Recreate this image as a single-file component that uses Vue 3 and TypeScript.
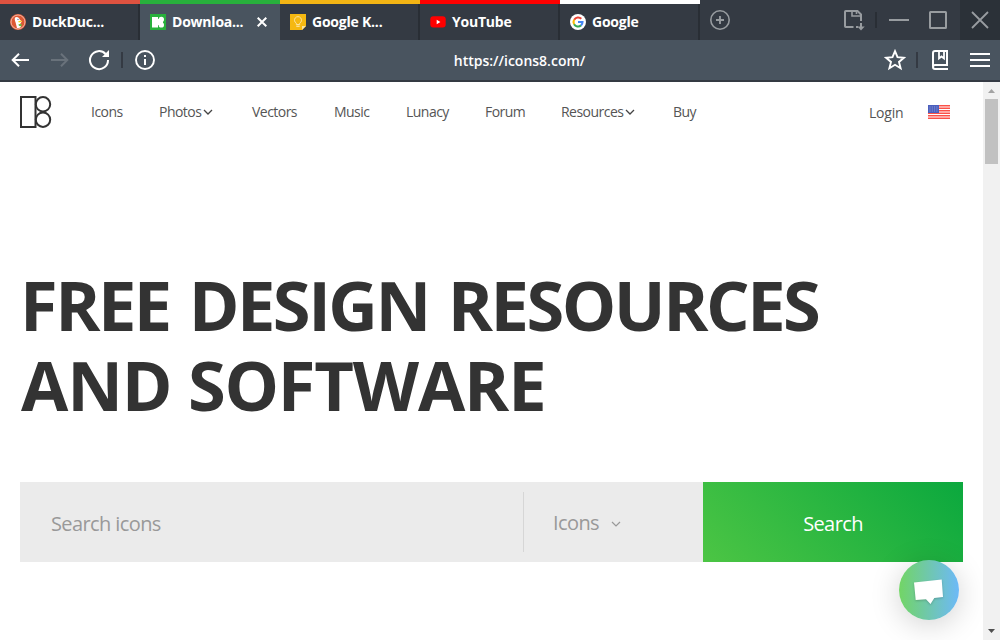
<script setup lang="ts">
interface Tab {
  title: string
  icon: string
  stripe: string
  active?: boolean
}

const tabs: Tab[] = [
  { title: 'DuckDuc...', icon: 'duck', stripe: '#de5240' },
  { title: 'Downloa...', icon: 'icons8', stripe: '#28b03c', active: true },
  { title: 'Google K...', icon: 'keep', stripe: '#f3b414' },
  { title: 'YouTube', icon: 'youtube', stripe: '#ff0000' },
  { title: 'Google', icon: 'google', stripe: '#ffffff' },
]

const links = [
  { label: 'Icons', menu: false },
  { label: 'Photos', menu: true },
  { label: 'Vectors', menu: false },
  { label: 'Music', menu: false },
  { label: 'Lunacy', menu: false },
  { label: 'Forum', menu: false },
  { label: 'Resources', menu: true },
  { label: 'Buy', menu: false },
]
</script>

<template>
  <div class="window">
    <div class="tabbar">
      <div
        v-for="tab in tabs"
        :key="tab.title"
        class="tab"
        :class="{ active: tab.active }"
        :style="{ borderTopColor: tab.stripe }"
      >
        <svg v-if="tab.icon === 'duck'" class="fav" viewBox="0 0 16 16">
          <circle cx="8" cy="8" r="8" fill="#de5833" />
          <circle cx="8" cy="8" r="7" fill="none" stroke="#f6d0c6" stroke-width=".8" />
          <path d="M5 3.500c1.800-1.200 4.200-.2 4.700 2l2.100 2-1.500 2 .7 3.500c-1.200 1-2.600 1.200-4 .9L5.600 8.500C4.800 6.500 4.500 5 5 3.500z" fill="#fff" />
          <path d="M8.200 7.200c1-.6 2.900-.7 3.900-.2-.4 1-2.300.9-3.300 1.600z" fill="#fdd20a" />
          <path d="M8.500 10.200l3-.4v2.600l-2.600-.6z" fill="#65bc46" />
          <circle cx="8" cy="5.300" r=".6" fill="#2d4f8e" />
        </svg>
        <svg v-else-if="tab.icon === 'icons8'" class="fav" viewBox="0 0 16 16">
          <path d="M0 0h16v16H0z" fill="#28b03c" />
          <path d="M2 3h6v10.500H2z" fill="#fff" />
          <path d="M8 5h5v6H8z" fill="#fff" />
          <circle cx="11.300" cy="5.500" r="2.700" fill="#fff" />
          <circle cx="11.300" cy="10.900" r="2.700" fill="#fff" />
          <path d="M8 2.500l1 1-1 1zM8 14l1-1-1-1zM14.200 7.500v1.400l-.9-.7z" fill="#28b03c" />
        </svg>
        <svg v-else-if="tab.icon === 'keep'" class="fav" viewBox="0 0 16 16">
          <path d="M0 0h16v12l-4 4H0z" fill="#f5b811" />
          <path d="M16 12l-4 4v-4z" fill="#fbe3a0" />
          <path d="M6.300 10.500V9.200a3.500 3.500 0 1 1 3.400 0v1.300z" fill="none" stroke="#fbe3a0" stroke-width="1" />
          <path d="M6.300 12.200h3.400" stroke="#fff1c9" stroke-width="1" />
        </svg>
        <svg v-else-if="tab.icon === 'youtube'" class="fav" viewBox="0 0 16 16">
          <rect x=".3" y="2.300" width="15.400" height="11.200" rx="3" fill="#f00" />
          <path d="M6.700 5.700v4.600l3.700-2.300z" fill="#fff" />
        </svg>
        <svg v-else class="fav" viewBox="0 0 16 16">
          <circle cx="8" cy="8" r="8" fill="#fff" />
          <g fill="none" stroke-width="2.100">
            <path d="M4.200 5.800A4.500 4.500 0 0 1 11.300 4.800" stroke="#ea4335" />
            <path d="M4.100 10.200A4.600 4.600 0 0 1 4.100 5.800" stroke="#fbbc05" />
            <path d="M11 11.400A4.500 4.500 0 0 1 4.100 10.200" stroke="#34a853" />
            <path d="M8 8h4.500A4.600 4.600 0 0 1 11 11.400" stroke="#4285f4" />
          </g>
        </svg>
        <span class="tab-title">{{ tab.title }}</span>
        <svg v-if="tab.active" class="tab-close" viewBox="0 0 10 10">
          <path d="M.7.700l8.600 8.600M9.300.700L.700 9.300" stroke="#fff" stroke-width="2" />
        </svg>
      </div>
      <svg class="plus" viewBox="0 0 20 20">
        <circle cx="10" cy="10" r="9.200" fill="none" stroke="#989ca0" stroke-width="1.600" />
        <path d="M10 6v8M6 10h8" stroke="#989ca0" stroke-width="1.900" />
      </svg>
      <div class="window-tools">
        <svg class="save" viewBox="0 0 22 22" fill="none" stroke="#989ca0" stroke-width="2">
          <path d="M10.500 18H2.800Q2 18 2 17.200V2.800Q2 2 2.800 2h11.700L18 5.500V12" />
          <path d="M9 2v5h8.500M13.500 2v3" stroke-width="1.600" />
          <path d="M13 18h2M18 14v4" />
          <path d="M14.300 17.500h7.400L18 21.500z" fill="#989ca0" stroke="none" />
        </svg>
        <i class="divider"></i>
        <svg class="minimize" viewBox="0 0 20 20"><path d="M0 10h20" stroke="#989ca0" stroke-width="2" /></svg>
        <svg class="maximize" viewBox="0 0 18 18"><rect x="1" y="1" width="16" height="16" rx=".5" fill="none" stroke="#989ca0" stroke-width="2" /></svg>
        <div class="close">
          <svg viewBox="0 0 18 18"><path d="M1 1l16 16M17 1L1 17" stroke="#989ca0" stroke-width="1.800" /></svg>
        </div>
      </div>
    </div>

    <div class="toolbar">
      <div class="side">
        <svg class="arrow" viewBox="0 0 18 14" fill="none" stroke="#fff" stroke-width="2">
          <path d="M18 7H1.500M8 .800L1.700 7 8 13.200" />
        </svg>
        <svg class="arrow forward" viewBox="0 0 18 14" fill="none" stroke="#69727b" stroke-width="2">
          <path d="M0 7h16.500M10 .800L16.300 7 10 13.200" />
        </svg>
        <svg class="reload" viewBox="0 0 22 22">
          <path d="M17.600 5A9 9 0 1 0 20 11" fill="none" stroke="#fff" stroke-width="2" />
          <path d="M21 1v7h-7z" fill="#fff" />
        </svg>
        <i class="divider"></i>
        <svg class="info" viewBox="0 0 20 20">
          <circle cx="10" cy="10" r="9" fill="none" stroke="#fff" stroke-width="1.900" />
          <path d="M10 5v2M10 9v6" stroke="#fff" stroke-width="2" />
        </svg>
      </div>
      <div class="address">https://icons8.com/</div>
      <div class="side end">
        <svg class="star" viewBox="0 0 22 22">
          <path d="M11 2.200l2.500 6 6.500.5-5 4.200 1.600 6.400L11 15.800l-5.600 3.500L7 12.900 2 8.700l6.500-.5z" fill="none" stroke="#fff" stroke-width="1.900" />
        </svg>
        <i class="divider"></i>
        <svg class="book" viewBox="0 0 16 20" fill="none" stroke="#fff" stroke-width="2">
          <path d="M15 15V1H3Q1 1 1 3v13.500M16 15H3q-2 0-2 2t2 2h13" />
          <path d="M7 1v7.500l2.500-2 2.500 2V1" stroke-width="1.800" />
        </svg>
        <svg class="menu" viewBox="0 0 20 14" stroke="#fff" stroke-width="2"><path d="M0 1h20M0 7h20M0 13h20" /></svg>
      </div>
    </div>

    <div class="viewport">
      <main class="page">
        <header>
          <svg class="logo" viewBox="0 0 32 32" fill="none" stroke="#333" stroke-width="2">
            <rect x="1" y="1" width="14.500" height="30" />
            <circle cx="23" cy="8.300" r="7.200" />
            <circle cx="23" cy="23.700" r="7.200" />
          </svg>
          <nav>
            <a v-for="link in links" :key="link.label">
              <span>{{ link.label }}</span>
              <svg v-if="link.menu" class="chev" viewBox="0 0 10 6"><path d="M1 1l4 4 4-4" fill="none" stroke="#444" stroke-width="1.300" /></svg>
            </a>
          </nav>
          <a class="login">Login</a>
          <svg class="flag" viewBox="0 0 22 14">
            <path d="M0 0h22v14H0z" fill="#fff" />
            <path d="M0 .7h22M0 3.200h22M0 5.700h22M0 8.200h22M0 10.700h22M0 13.200h22" stroke="#fb5148" stroke-width="1.400" />
            <path d="M0 0h11v8H0z" fill="#4b5fbd" />
            <path d="M1.500 2h8.500M1.500 4h8.500M1.500 6h8.500" stroke="#a7b0e0" stroke-width=".8" stroke-dasharray="1 1.300" />
          </svg>
        </header>

        <h1><span class="first">FREE DESIGN RESOURCES</span><br /><span class="second">AND SOFTWARE</span></h1>

        <form class="search">
          <div class="query">Search icons</div>
          <div class="kind">
            <span>Icons</span>
            <svg class="kind-chev" viewBox="0 0 10 6"><path d="M1 1l4 4 4-4" fill="none" stroke="#999" stroke-width="1.200" /></svg>
          </div>
          <div class="submit"><span>Search</span></div>
        </form>

        <div class="chat">
          <svg viewBox="0 0 60 60">
            <path d="M15 22.600L42.700 19.500 44 37 35.300 38 31.500 44 27 39.200 16.700 40z" fill="#fff" />
          </svg>
        </div>
      </main>
      <div class="scrollbar">
        <svg class="up" viewBox="0 0 7 4"><path d="M0 4h7L3.500 0z" fill="#a3a3a3" /></svg>
        <div class="thumb"></div>
        <svg class="down" viewBox="0 0 7 4"><path d="M0 0h7L3.500 4z" fill="#505050" /></svg>
      </div>
    </div>
  </div>
</template>

<style>
body {
  margin: 0;
  overflow: hidden;
}
</style>

<style scoped>
.window {
  width: 1000px;
  height: 640px;
  display: flex;
  flex-direction: column;
  overflow: hidden;
  font-family: "Open Sans", "Noto Sans", sans-serif;
  background: #fff;
}
svg {
  display: block;
  flex: none;
}
.tabbar {
  height: 40px;
  flex: none;
  display: flex;
  align-items: center;
  background: #343a43;
}
.tab {
  box-sizing: border-box;
  width: 140px;
  height: 40px;
  flex: none;
  display: flex;
  align-items: center;
  padding-left: 10px;
  border-top: 4px solid;
  box-shadow: inset -2px 0 #292e35;
  color: #fff;
  font-size: 14px;
  font-weight: 700;
}
.tab.active {
  background: #49545f;
  box-shadow: none;
}
.fav {
  width: 16px;
  height: 16px;
  margin-right: 6px;
}
.tab-title {
  width: 84px;
  padding-bottom: 2px;
  white-space: nowrap;
  letter-spacing: -0.22px;
}
.tab-close {
  width: 10px;
  height: 10px;
  margin-left: 1px;
}
.plus {
  width: 20px;
  height: 20px;
  margin-left: 10px;
}
.window-tools {
  margin-left: auto;
  height: 40px;
  display: flex;
  align-items: center;
}
.save {
  width: 22px;
  height: 22px;
  margin-right: 10px;
}
.divider {
  width: 2px;
  height: 16px;
  flex: none;
  background: #292e35;
}
.minimize {
  width: 20px;
  height: 20px;
  margin: 0 20px 0 12px;
}
.maximize {
  width: 18px;
  height: 18px;
  margin-right: 13px;
}
.close {
  width: 40px;
  height: 40px;
  display: flex;
  align-items: center;
  justify-content: center;
  background: #2b3138;
}
.close svg {
  width: 18px;
  height: 18px;
}
.toolbar {
  height: 40px;
  flex: none;
  display: flex;
  align-items: center;
  background: #49545f;
  border-bottom: 2px solid #343a43;
}
.side {
  width: 180px;
  display: flex;
  align-items: center;
}
.end {
  width: 116px;
}
.arrow {
  width: 18px;
  height: 14px;
  margin-left: 11px;
}
.forward {
  margin-left: 22px;
}
.reload {
  width: 22px;
  height: 22px;
  margin: 0 11px 0 19px;
}
.side .divider {
  background: #343a43;
}
.info {
  width: 20px;
  height: 20px;
  margin-left: 12px;
}
.address {
  flex: 1;
  padding-right: 25px;
  text-align: center;
  color: #fff;
  font-size: 14px;
  font-weight: 600;
}
.star {
  width: 22px;
  height: 22px;
  margin-right: 10px;
}
.book {
  width: 16px;
  height: 20px;
  margin-left: 14px;
}
.menu {
  width: 20px;
  height: 14px;
  margin-left: 22px;
}
.viewport {
  flex: 1;
  min-height: 0;
  display: flex;
}
.page {
  position: relative;
  width: 983px;
  overflow: hidden;
  color: #333;
}
header {
  height: 60px;
  display: flex;
  align-items: center;
  padding-left: 20px;
}
.logo {
  width: 32px;
  height: 32px;
}
nav {
  display: grid;
  grid-template-columns: 68px 93px 82px 72px 79px 76px 112px 50px;
  margin-left: 39px;
  font-size: 14px;
  letter-spacing: -0.53px;
  color: #555;
}
nav a {
  display: flex;
  align-items: center;
}
nav span {
  padding-bottom: 2px;
}
.chev {
  width: 10px;
  height: 6px;
  margin-left: 2px;
}
.login {
  margin-left: 146px;
  width: 59px;
  font-size: 14px;
  letter-spacing: -0.2px;
  color: #555;
  padding-top: 1px;
}
.flag {
  width: 22px;
  height: 14px;
}
h1 {
  margin: 123px 0 0 20px;
  font-size: 68.6px;
  line-height: 80px;
  font-weight: 700;
  white-space: nowrap;
}
.first {
  letter-spacing: -2.5px;
  word-spacing: 3.6px;
}
.second {
  margin-left: 1px;
  letter-spacing: -1.2px;
}
.search {
  display: flex;
  width: 943px;
  height: 80px;
  margin: 57px 0 0 20px;
  background: #ebebeb;
  font-size: 20px;
  letter-spacing: -0.6px;
  color: #999;
}
.query {
  width: 472px;
  padding-left: 31px;
  line-height: 84px;
}
.kind {
  width: 150px;
  height: 60px;
  margin-top: 10px;
  padding-left: 29px;
  border-left: 1px solid #d6d6d6;
  display: flex;
  align-items: center;
}
.kind-chev {
  width: 10px;
  height: 6px;
  margin: 4px 0 0 12px;
}
.submit {
  width: 260px;
  line-height: 84px;
  text-align: center;
  color: #fff;
  background: linear-gradient(45deg, #4cc544, #0ba83e);
}
.chat {
  position: absolute;
  left: 899px;
  top: 478px;
  width: 60px;
  height: 60px;
  border-radius: 50%;
  background: linear-gradient(90deg, #72d565, #6db9f8);
  box-shadow: 0 5px 30px rgba(0, 0, 0, 0.18);
}
.chat path {
  filter: drop-shadow(0 1px 1px rgba(0, 0, 0, 0.2));
}
.scrollbar {
  width: 17px;
  display: flex;
  flex-direction: column;
  align-items: center;
  background: #f1f1f1;
}
.up {
  width: 7px;
  height: 4px;
  margin: 7px 0 6px;
}
.thumb {
  width: 13px;
  height: 65px;
  background: #c1c1c1;
}
.down {
  width: 7px;
  height: 4px;
  margin: auto 0 7px;
}
</style>
